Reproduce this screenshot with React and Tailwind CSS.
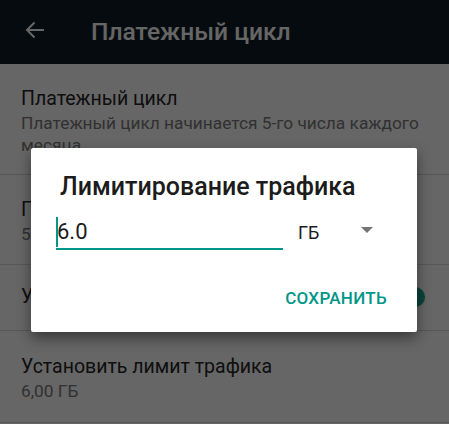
import React from "react";

const FONT = { fontFamily: "Roboto, 'Noto Sans', sans-serif" };

function Row({ title, sub, children, className = "" }) {
  return (
    <div className={"flex items-center border-b border-[#d6d6d6] pl-[21px] pr-[24px] " + className}>
      <div className="flex-1">
        <div className="text-[19.5px] leading-[24px] text-[#262626]">{title}</div>
        {sub && <div className="mt-[1px] text-[17.3px] leading-[22px] text-[#7a7a7a]">{sub}</div>}
      </div>
      {children}
    </div>
  );
}

export default function App() {
  return (
    <div className="relative h-[424px] w-[449px] overflow-hidden bg-white" style={FONT}>
      {/* toolbar */}
      <div className="flex h-16 items-center bg-[#0f1d26]">
        <svg className="ml-[25px] mt-[-4px] h-5 w-5" viewBox="0 0 20 20" fill="none" stroke="#ffffff" strokeWidth="2">
          <path d="M19 10H2M9.5 2.5L2 10l7.5 7.5" />
        </svg>
        <span className="ml-[46px] text-[24.6px] font-medium text-white">Платежный цикл</span>
      </div>

      <Row
        title="Платежный цикл"
        sub={<>Платежный цикл начинается 5-го числа каждого<br />месяца</>}
        className="pt-[23px] pb-[18px]"
      />
      <Row title="Предупреждение о трафике" sub="5,00 ГБ" className="pt-[23px] pb-[19px]" />
      <Row title="Установить лимит трафика" className="h-[66px] pb-[2px]">
        <div className="relative flex h-5 w-9 items-center">
          <div className="h-[14px] w-[34px] rounded-full bg-[#80cbc4]" />
          <div className="absolute right-0 h-5 w-5 rounded-full bg-[#1da795] shadow" />
        </div>
      </Row>
      <Row title="Установить лимит трафика" sub="6,00 ГБ" className="pt-[24px] pb-[20px]" />

      {/* dim */}
      <div className="absolute inset-0 bg-black/60" />

      {/* dialog */}
      <div className="absolute left-[31px] top-[148px] flex h-[184px] w-[386px] flex-col rounded-[2px] bg-white shadow-[0_6px_14px_rgba(0,0,0,0.45)]">
        <div className="mt-[24px] pl-[29px] text-[25px] font-medium leading-[30px] text-[#1c1c1c]">
          Лимитирование трафика
        </div>
        <div className="mt-[15px] flex items-end pl-[25px]">
          <div className="flex w-[227px] items-center border-b-2 border-[#009688] pb-[1px]">
            <span className="h-[30px] w-[2px] bg-[#009688]" />
            <span className="ml-[-1px] text-[22px] leading-[28px] text-[#1c1c1c]">6.0</span>
          </div>
          <span className="ml-[15px] pb-[3px] text-[18px] leading-[28px] text-[#1c1c1c]">ГБ</span>
          <svg className="mb-[17px] ml-[42px] h-[6px] w-[12px]" viewBox="0 0 12 6">
            <path d="M0 0h12L6 6z" fill="#757575" />
          </svg>
        </div>
        <div className="mt-auto mb-[24px] flex justify-end pr-[30px]">
          <span className="text-[17px] font-medium leading-[20px] tracking-[0.3px] text-[#009688]">СОХРАНИТЬ</span>
        </div>
      </div>
    </div>
  );
}
